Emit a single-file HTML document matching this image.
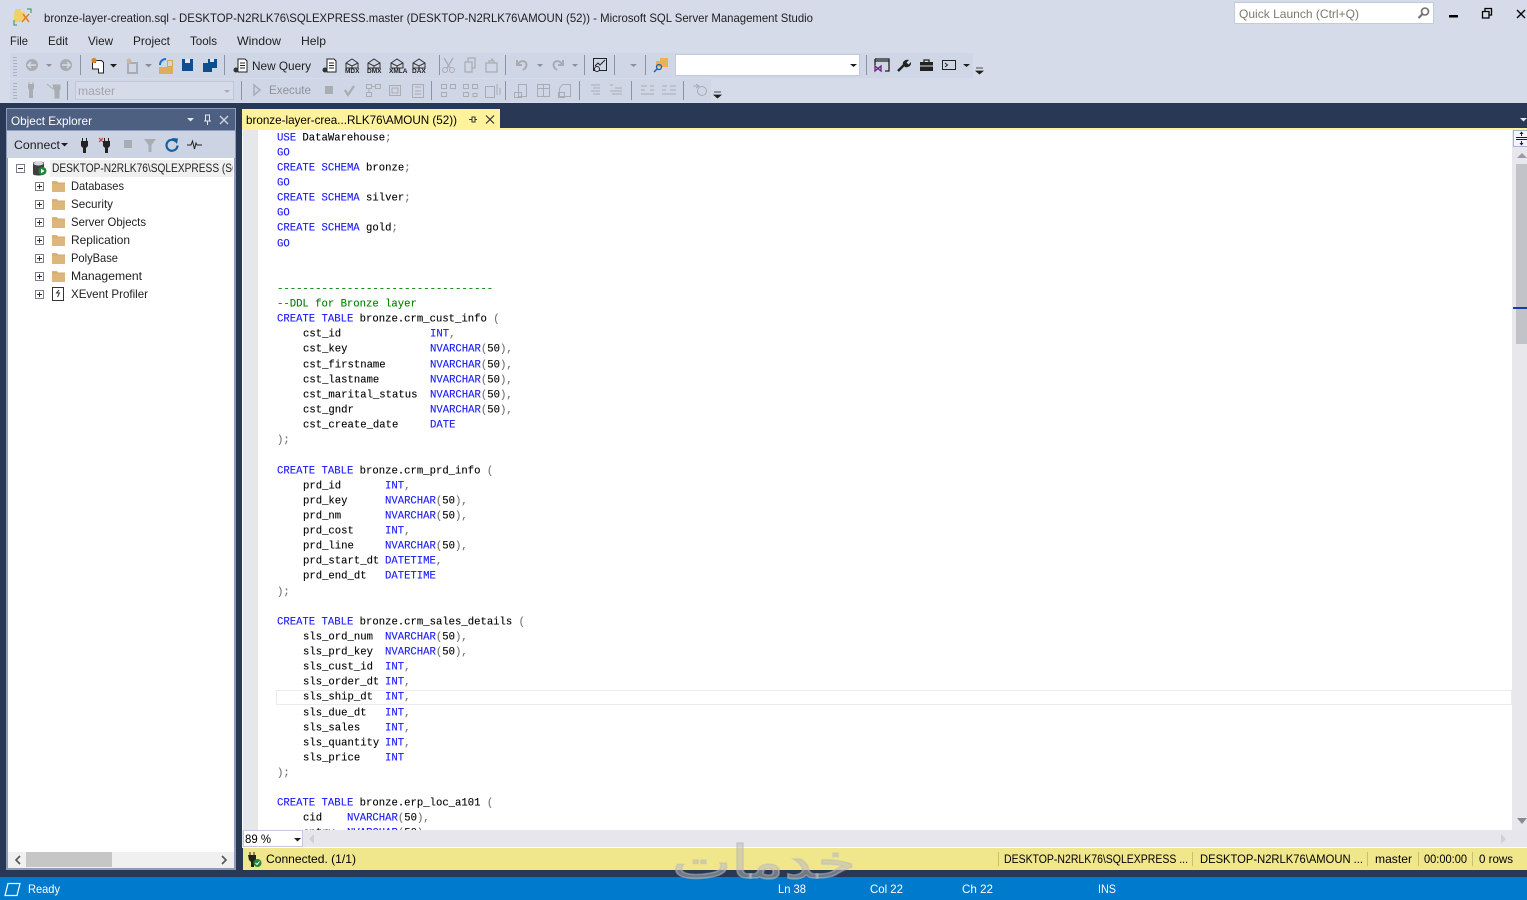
<!DOCTYPE html>
<html><head><meta charset="utf-8"><style>
html,body{margin:0;padding:0;width:1527px;height:900px;overflow:hidden;background:#293955}
svg{display:block}
text{font-family:"Liberation Sans",sans-serif;font-size:12px;fill:#1e1e1e;white-space:pre}
.c text{font-family:"Liberation Mono",monospace;font-size:10.6px;fill:#000;stroke:#000;stroke-width:.12}
.c .k{fill:#1a1aff;stroke:#1a1aff}.c .g{fill:#707070;stroke:#707070}
.c text.kl{fill:#1a1aff;stroke:#1a1aff}.c text.gl{fill:#707070;stroke:#707070}.c text.nl{fill:#008000;stroke:#008000}
</style></head><body>
<svg width="1527" height="900" viewBox="0 0 1527 900" xmlns="http://www.w3.org/2000/svg">
<defs>
<g id="fo"><path d="M0 2h5l1 1.500h7v9.500H0z" fill="#dcb67a"/><path d="M0 4h13" stroke="#c9a264" stroke-width=".6"/></g>
<g id="pl"><rect x=".5" y=".5" width="8" height="8" fill="#fff" stroke="#7a7f8a"/><path d="M2 4.500h5M4.500 2v5" stroke="#333"/></g>
<g id="hex" fill="none" stroke="#333"><path d="M1 5l6-4 6 4v5H1zM1 5l6 3 6-3M7 8v2"/></g>
</defs>
<rect width="1527" height="103" fill="#d6dbe9"/>
<!-- app icon -->
<path d="M15 9h6v3h-6zM14 12h11v6l-4 4h-7z" fill="#f3cf6c"/><path d="M23 14l6 8M29 14l-7 8" stroke="#e0812a" stroke-width="1.600"/><path d="M14 20v5h3M27 9h4v4" stroke="#2f8f6a" fill="none"/>
<text x="44" y="22" textLength="769" lengthAdjust="spacingAndGlyphs">bronze-layer-creation.sql - DESKTOP-N2RLK76\SQLEXPRESS.master (DESKTOP-N2RLK76\AMOUN (52)) - Microsoft SQL Server Management Studio</text>
<!-- quick launch -->
<rect x="1234.500" y="2.500" width="199" height="21" fill="#fff" stroke="#c3c9de"/>
<text x="1239" y="18" textLength="120" lengthAdjust="spacingAndGlyphs" style="fill:#7a7a70">Quick Launch (Ctrl+Q)</text>
<circle cx="1425" cy="11.500" r="3.500" fill="none" stroke="#6f6f6f" stroke-width="1.600"/><path d="M1422.500 14l-4 4" stroke="#6f6f6f" stroke-width="2"/>
<rect x="1449" y="15" width="9" height="2.500" fill="#000"/>
<path d="M1482.500 11.500h6.500v6.500h-6.500zM1485 11v-2.500h6.500v6.500h-2.500" fill="none" stroke="#000" stroke-width="1.300"/>
<path d="M1517 10l8 8M1525 10l-8 8" stroke="#000" stroke-width="1.400"/>
<!-- menu -->
<g>
<text x="10" y="45" textLength="18" lengthAdjust="spacingAndGlyphs">File</text>
<text x="48" y="45" textLength="20" lengthAdjust="spacingAndGlyphs">Edit</text>
<text x="88" y="45" textLength="25" lengthAdjust="spacingAndGlyphs">View</text>
<text x="133" y="45" textLength="37" lengthAdjust="spacingAndGlyphs">Project</text>
<text x="190" y="45" textLength="27" lengthAdjust="spacingAndGlyphs">Tools</text>
<text x="237" y="45" textLength="44" lengthAdjust="spacingAndGlyphs">Window</text>
<text x="301" y="45" textLength="25" lengthAdjust="spacingAndGlyphs">Help</text>
</g>
<!-- toolbars -->
<rect x="10" y="53" width="963" height="25" fill="#cfd6e5"/>
<rect x="10" y="79" width="701" height="23" fill="#cfd6e5"/>
<path d="M14 57v19M16 57v19M14 83v16M16 83v16" stroke="#8a8f9c" stroke-width="1" stroke-dasharray="1 2"/>
<path d="M80.500 55v20M224.500 55v20M439.500 55v20M505.500 55v20M584.500 55v20M614.500 55v20M645.500 55v20M866.500 55v20M67.500 81v19M241.500 81v19M431.500 81v19M505.500 81v19M579.500 81v19M631.500 81v19M683.500 81v19" stroke="#8c93a3"/>
<!-- nav -->
<circle cx="32" cy="65" r="6" fill="#a9acb2"/><path d="M36 65h-7M31 62l-3 3 3 3" stroke="#d6dbe9" fill="none" stroke-width="1.400"/>
<path d="M46 64h6l-3 3z" fill="#8d909a"/>
<circle cx="66" cy="65" r="6" fill="#a9acb2"/><path d="M62 65h7M67 62l3 3-3 3" stroke="#d6dbe9" fill="none" stroke-width="1.400"/>
<!-- new project -->
<path d="M92.500 62.500h3v-2h6l2 2v10.500h-5v-4h-6z" fill="#fff" stroke="#222"/><circle cx="94" cy="60.500" r="2.600" fill="#e0812a"/>
<path d="M110 64h7l-3.500 3.500z" fill="#1e1e1e"/>
<path d="M128 63h9v10h-9z" fill="none" stroke="#a9acb2" stroke-width="2"/><circle cx="129" cy="61" r="2.500" fill="#c9b9a0"/>
<path d="M145 64h7l-3.500 3.500z" fill="#8d909a"/>
<path d="M159 67h14v7h-14z" fill="#e0ad5f"/><path d="M167.500 60.500h5v6h-5z" fill="none" stroke="#d9a550"/><path d="M160 65c0-4 3-6 6-6" stroke="#1a6fc0" stroke-width="2" fill="none"/>
<path d="M182 59h11v12h-11z" fill="#0e4d92"/><rect x="185" y="59" width="5" height="4" fill="#dfe6f2"/>
<path d="M203 63h9v9h-9z" fill="#0e4d92"/><path d="M208 59h9v9h-5v-5h-4z" fill="#0e4d92"/><rect x="210" y="59" width="4" height="3" fill="#dfe6f2"/>
<!-- new query -->
<path d="M238 59h7l2 2v11h-9z" fill="#fff" stroke="#222"/><path d="M240 63h5M240 65.500h5M240 68h5" stroke="#222"/><circle cx="236" cy="70" r="2.500" fill="#333"/>
<text x="252" y="70" textLength="59" lengthAdjust="spacingAndGlyphs">New Query</text>
<path d="M327 59h7l2 2v11h-9z" fill="#fff" stroke="#222"/><path d="M329 63h5M329 65.500h5M329 68h5" stroke="#222"/><circle cx="325" cy="70" r="2.500" fill="#333"/>
<use href="#hex" x="345" y="58"/><use href="#hex" x="367" y="58"/><use href="#hex" x="390" y="58"/><use href="#hex" x="412" y="58"/>
<g><text x="345" y="73" style="font-size:6.500px;font-weight:700">MDX</text><text x="367" y="73" style="font-size:6.500px;font-weight:700">DMX</text><text x="389" y="73" style="font-size:6.500px;font-weight:700">XMLA</text><text x="412" y="73" style="font-size:6.500px;font-weight:700">DAX</text></g>
<!-- cut copy paste -->
<path d="M444 58l6 10M453 58l-6 10" stroke="#a9acb2" stroke-width="1.300"/><circle cx="445" cy="70" r="2.500" fill="none" stroke="#a9acb2"/><circle cx="452" cy="70" r="2.500" fill="none" stroke="#a9acb2"/>
<path d="M465 62h7v10h-7zM468 62v-4h7v10h-3" fill="none" stroke="#a9acb2" stroke-width="1.200"/>
<path d="M486 63h11v9h-11zM489 63v-2h2l1-2 1 2h1v2" fill="none" stroke="#a9acb2" stroke-width="1.200"/>
<!-- undo redo -->
<path d="M517 60v5h5M518 64c2-3 6-4 8-1 1.500 3-1 6-3 7" fill="none" stroke="#a9acb2" stroke-width="2"/>
<path d="M537 64h6l-3 3z" fill="#8d909a"/>
<path d="M563 60v5h-5M562 64c-2-3-6-4-8-1-1.500 3 1 6 3 7" fill="none" stroke="#a9acb2" stroke-width="2"/>
<path d="M572 64h6l-3 3z" fill="#8d909a"/>
<rect x="593.500" y="58.500" width="13" height="12" fill="none" stroke="#222"/><path d="M595 66l3-3 2 2 5-5" stroke="#222" fill="none"/><circle cx="597" cy="69" r="2.500" fill="#d6dbe9" stroke="#222"/>
<path d="M630 64h7l-3.500 3z" fill="#8d909a"/>
<path d="M660 58h8v9h-12v-6h4z" fill="#eeb057"/><circle cx="659" cy="67" r="2.500" fill="none" stroke="#1a5fb4" stroke-width="1.300"/><path d="M657 69l-3 3" stroke="#1a5fb4" stroke-width="1.500"/>
<rect x="675.500" y="54.500" width="184" height="21" fill="#fff" stroke="#c3c9de"/>
<path d="M850 64h7l-3.500 3z" fill="#1e1e1e"/>
<path d="M875 59h14v12h-4M875 59v6M875 61h14" fill="none" stroke="#222" stroke-width="1.300"/><path d="M875 66l6 5M881 66l-6 5v-5l6 5z" stroke="#68217a" stroke-width="1.300" fill="none"/>
<path d="M898 71l6-6" stroke="#222" stroke-width="2.400"/><path d="M903 65c-1-3 2-6 6-5l-2.500 2.500 2 2 2.500-2.500c.5 4-3 6-6 5z" fill="#222"/>
<path d="M920 62h13v9h-13z" fill="#222"/><path d="M924 62v-2h5v2" fill="none" stroke="#222" stroke-width="1.300"/><path d="M920 66h13" stroke="#d6dbe9"/>
<rect x="942.500" y="60.500" width="13" height="9" fill="none" stroke="#222"/><path d="M945 63l2.500 2-2.500 2" stroke="#222" fill="none"/>
<path d="M963 64h7l-3.500 3z" fill="#1e1e1e"/>
<path d="M976 68h7M976 71h7l-3.500 3z" fill="#1e1e1e" stroke="#1e1e1e" stroke-width=".8"/>
<!-- row 2 -->
<path d="M28 84h6v4l-1 2v8h-4v-8l-1-2z" fill="#a9acb2"/><path d="M29 82v2M33 82v2" stroke="#a9acb2"/>
<path d="M53 85h7v4l-1 2v7h-4v-7l-1-2zM47 84l6 5" fill="#a9acb2" stroke="#a9acb2"/>
<rect x="75.500" y="81.500" width="158" height="18" fill="#d6dbe9" stroke="#c1c7d6"/>
<text x="78" y="95" textLength="37" lengthAdjust="spacingAndGlyphs" style="fill:#a2a4a8">master</text>
<path d="M224 90h6l-3 3z" fill="#a9acb2"/>
<path d="M254 85l6 5-6 5z" fill="none" stroke="#a9acb2" stroke-width="1.500"/>
<text x="269" y="94" textLength="42" lengthAdjust="spacingAndGlyphs" style="fill:#8f929a">Execute</text>
<rect x="325" y="86" width="8" height="8" fill="#a9acb2"/>
<path d="M345 90l3 5 6-9" fill="none" stroke="#a9acb2" stroke-width="2.200"/>
<g fill="none" stroke="#a9acb2"><path d="M366.500 84.500h5v4h-5zM375.500 84.500h5v4h-5zM366.500 92.500h5v4h-5zM372 86.500h3M369 89v3"/>
<path d="M389.500 85.500h11v10h-11zM392 88h6v5h-6z"/><path d="M412.500 84.500h11v13h-11zM415 87h6M415 91h6M415 94h6"/>
<path d="M441.500 84.500h5v4h-5zM450.500 84.500h5v4h-5zM441.500 92.500h5v4h-5zM463.500 84.500h5v4h-5zM472.500 84.500h5v4h-5zM463.500 92.500h5v4h-5zM473 93.500h4v3h-4z"/>
<path d="M485.500 86.500h9v11h-9zM497 84v11M500 88v7"/>
<path d="M518.500 84.500h8v12h-8zM514.500 92.500h7v5h-7zM537.500 84.500h12v12h-12zM537.500 88.500h12M543.500 84.500v12M559.500 88.500l3-4h8v12h-11zM558.500 92.500h6v5h-6z"/>
<path d="M591 85h9M593 88h7M591 91h9M593 94h7M610 85h3M615 88h7M610 91h12M612 94h10M641 86h6M650 86h4M641 90h4M650 90h4M641 94h13M662 86h5M670 86h6M662 90h4M670 90h6M662 94h14"/>
<circle cx="702" cy="91" r="4.500"/></g>
<path d="M693 86h6M696 84l3 2-3 2" stroke="#a9acb2" fill="none"/>
<path d="M714 92h7M714 95h7l-3.500 3z" fill="#1e1e1e" stroke="#1e1e1e" stroke-width=".8"/>
<!-- dark -->
<rect y="103" width="1527" height="774" fill="#293955"/>
<!-- object explorer -->
<rect x="6" y="108" width="230" height="762" fill="#8e9bbc"/>
<rect x="7" y="109" width="228" height="21" fill="#4d6082"/>
<text x="11" y="125" textLength="81" lengthAdjust="spacingAndGlyphs" style="fill:#fff">Object Explorer</text>
<path d="M187 118h7l-3.500 3.500z" fill="#e4e8f2"/>
<path d="M205.500 115h4v6h-4zM204 121h7M207.500 121v4" stroke="#e4e8f2" fill="none"/>
<path d="M220 116l8 8M228 116l-8 8" stroke="#cfd6e5" stroke-width="1.300"/>
<rect x="7" y="131" width="228" height="27" fill="#ccd3e3"/>
<text x="14" y="149" textLength="46" lengthAdjust="spacingAndGlyphs">Connect</text>
<path d="M61 143h7l-3.500 3.500z" fill="#1e1e1e"/>
<path d="M81 141h7v5l-2 2v5h-3v-5l-2-2z" fill="#222"/><path d="M82.500 138v3M86.500 138v3" stroke="#222"/>
<path d="M103 141h7v5l-2 2v5h-3v-5l-2-2z" fill="#222"/><path d="M104.500 138v3M108.500 138v3" stroke="#222"/><path d="M99 138l4 4M103 138l-4 4" stroke="#c0392b"/>
<rect x="124" y="140" width="8" height="8" fill="#a9acb2"/>
<path d="M144 139h12l-4.500 6v7h-3v-7z" fill="#a9acb2"/>
<path d="M176 141.500a5.500 5.500 0 1 0 1.500 4" fill="none" stroke="#14609e" stroke-width="2.200"/><path d="M172 138l6 .5-1 5.500z" fill="#14609e"/>
<path d="M187 145h4l1.500-4 2 8 1.500-6 1 2h5" fill="none" stroke="#222"/>
<!-- tree -->
<rect x="8" y="158" width="226" height="710" fill="#fff"/>
<rect x="50" y="160" width="183" height="17" fill="#f0f0f0"/>
<rect x="16.500" y="164.500" width="8" height="8" fill="#fff" stroke="#7a7f8a"/><path d="M18 168.500h5" stroke="#333"/>
<path d="M33 163c0-2 11-2 11 0v11c0 2-11 2-11 0z" fill="#3f3f3f"/><ellipse cx="38.500" cy="163.500" rx="5" ry="2" fill="#d8d8d8"/>
<circle cx="42.500" cy="171" r="4" fill="#1d8a3a"/><path d="M41 168.800l3.500 2.200-3.500 2.200z" fill="#fff"/>
<text x="52" y="172" textLength="188" lengthAdjust="spacingAndGlyphs">DESKTOP-N2RLK76\SQLEXPRESS (SQ</text>
<rect x="233" y="158" width="1" height="22" fill="#fff"/><rect x="234" y="158" width="2" height="22" fill="#8e9bbc"/><rect x="236" y="158" width="6" height="22" fill="#293955"/>
<use href="#pl" x="35" y="182"/><use href="#fo" x="52" y="179"/><text x="71" y="190" textLength="53" lengthAdjust="spacingAndGlyphs">Databases</text>
<use href="#pl" x="35" y="200"/><use href="#fo" x="52" y="197"/><text x="71" y="208" textLength="42" lengthAdjust="spacingAndGlyphs">Security</text>
<use href="#pl" x="35" y="218"/><use href="#fo" x="52" y="215"/><text x="71" y="226" textLength="75" lengthAdjust="spacingAndGlyphs">Server Objects</text>
<use href="#pl" x="35" y="236"/><use href="#fo" x="52" y="233"/><text x="71" y="244" textLength="59" lengthAdjust="spacingAndGlyphs">Replication</text>
<use href="#pl" x="35" y="254"/><use href="#fo" x="52" y="251"/><text x="71" y="262" textLength="47" lengthAdjust="spacingAndGlyphs">PolyBase</text>
<use href="#pl" x="35" y="272"/><use href="#fo" x="52" y="269"/><text x="71" y="280" textLength="71" lengthAdjust="spacingAndGlyphs">Management</text>
<use href="#pl" x="35" y="290"/><rect x="52.500" y="287.500" width="11" height="13" fill="#fff" stroke="#333"/><path d="M59 290l-2.500 3h3l-2 4" stroke="#333" fill="none"/><text x="71" y="298" textLength="77" lengthAdjust="spacingAndGlyphs">XEvent Profiler</text>
<!-- OE scrollbar -->
<rect x="8" y="852" width="226" height="16" fill="#f0f0f0"/>
<rect x="26" y="852" width="86" height="15" fill="#c6c6c6"/>
<path d="M20 856l-4 4 4 4M222 856l4 4-4 4" fill="none" stroke="#555" stroke-width="1.600"/>
<!-- tab -->
<rect x="242" y="109" width="258" height="19" fill="#fff29d"/>
<text x="246" y="124" textLength="211" lengthAdjust="spacingAndGlyphs" style="fill:#000">bronze-layer-crea...RLK76\AMOUN (52))</text>
<path d="M469 119.500h3M472 117h3v5h-3zM475 119.500h2" stroke="#333" fill="none"/>
<path d="M486 115.500l8 8M494 115.500l-8 8" stroke="#333" stroke-width="1.200"/>
<path d="M1520 118h7l-3.500 3.500z" fill="#e4e8f2"/>
<rect x="242" y="128" width="1285" height="2" fill="#fff29d"/>
<!-- editor -->
<rect x="242" y="130" width="1285" height="718" fill="#fff"/>
<rect x="243" y="130" width="15" height="700" fill="#e6e7e8"/>
<rect x="276.500" y="690.500" width="1235" height="14" fill="#fff" stroke="#eaeaf2"/>
<g class="c" transform="translate(0,-.6)">
<text x="277" y="141"><tspan class="k">USE</tspan> DataWarehouse<tspan class="g">;</tspan></text>
<text x="277" y="156" class="kl">GO</text>
<text x="277" y="171"><tspan class="k">CREATE</tspan> <tspan class="k">SCHEMA</tspan> bronze<tspan class="g">;</tspan></text>
<text x="277" y="186" class="kl">GO</text>
<text x="277" y="201"><tspan class="k">CREATE</tspan> <tspan class="k">SCHEMA</tspan> silver<tspan class="g">;</tspan></text>
<text x="277" y="216" class="kl">GO</text>
<text x="277" y="231"><tspan class="k">CREATE</tspan> <tspan class="k">SCHEMA</tspan> gold<tspan class="g">;</tspan></text>
<text x="277" y="247" class="kl">GO</text>
<text x="277" y="292" class="nl">----------------------------------</text>
<text x="277" y="307" class="nl">--DDL for Bronze layer</text>
<text x="277" y="322"><tspan class="k">CREATE</tspan> <tspan class="k">TABLE</tspan> bronze.crm_cust_info <tspan class="g">(</tspan></text>
<text x="303" y="337">cst_id<tspan x="430" class="k">INT</tspan><tspan class="g">,</tspan></text>
<text x="303" y="352">cst_key<tspan x="430" class="k">NVARCHAR</tspan><tspan class="g">(</tspan>50<tspan class="g">),</tspan></text>
<text x="303" y="368">cst_firstname<tspan x="430" class="k">NVARCHAR</tspan><tspan class="g">(</tspan>50<tspan class="g">),</tspan></text>
<text x="303" y="383">cst_lastname<tspan x="430" class="k">NVARCHAR</tspan><tspan class="g">(</tspan>50<tspan class="g">),</tspan></text>
<text x="303" y="398">cst_marital_status<tspan x="430" class="k">NVARCHAR</tspan><tspan class="g">(</tspan>50<tspan class="g">),</tspan></text>
<text x="303" y="413">cst_gndr<tspan x="430" class="k">NVARCHAR</tspan><tspan class="g">(</tspan>50<tspan class="g">),</tspan></text>
<text x="303" y="428">cst_create_date<tspan x="430" class="k">DATE</tspan></text>
<text x="277" y="443" class="gl">);</text>
<text x="277" y="474"><tspan class="k">CREATE</tspan> <tspan class="k">TABLE</tspan> bronze.crm_prd_info <tspan class="g">(</tspan></text>
<text x="303" y="489">prd_id<tspan x="385" class="k">INT</tspan><tspan class="g">,</tspan></text>
<text x="303" y="504">prd_key<tspan x="385" class="k">NVARCHAR</tspan><tspan class="g">(</tspan>50<tspan class="g">),</tspan></text>
<text x="303" y="519">prd_nm<tspan x="385" class="k">NVARCHAR</tspan><tspan class="g">(</tspan>50<tspan class="g">),</tspan></text>
<text x="303" y="534">prd_cost<tspan x="385" class="k">INT</tspan><tspan class="g">,</tspan></text>
<text x="303" y="549">prd_line<tspan x="385" class="k">NVARCHAR</tspan><tspan class="g">(</tspan>50<tspan class="g">),</tspan></text>
<text x="303" y="564">prd_start_dt<tspan x="385" class="k">DATETIME</tspan><tspan class="g">,</tspan></text>
<text x="303" y="579">prd_end_dt<tspan x="385" class="k">DATETIME</tspan></text>
<text x="277" y="595" class="gl">);</text>
<text x="277" y="625"><tspan class="k">CREATE</tspan> <tspan class="k">TABLE</tspan> bronze.crm_sales_details <tspan class="g">(</tspan></text>
<text x="303" y="640">sls_ord_num<tspan x="385" class="k">NVARCHAR</tspan><tspan class="g">(</tspan>50<tspan class="g">),</tspan></text>
<text x="303" y="655">sls_prd_key<tspan x="385" class="k">NVARCHAR</tspan><tspan class="g">(</tspan>50<tspan class="g">),</tspan></text>
<text x="303" y="670">sls_cust_id<tspan x="385" class="k">INT</tspan><tspan class="g">,</tspan></text>
<text x="303" y="685">sls_order_dt<tspan x="385" class="k">INT</tspan><tspan class="g">,</tspan></text>
<text x="303" y="700">sls_ship_dt<tspan x="385" class="k">INT</tspan><tspan class="g">,</tspan></text>
<text x="303" y="716">sls_due_dt<tspan x="385" class="k">INT</tspan><tspan class="g">,</tspan></text>
<text x="303" y="731">sls_sales<tspan x="385" class="k">INT</tspan><tspan class="g">,</tspan></text>
<text x="303" y="746">sls_quantity<tspan x="385" class="k">INT</tspan><tspan class="g">,</tspan></text>
<text x="303" y="761">sls_price<tspan x="385" class="k">INT</tspan></text>
<text x="277" y="776" class="gl">);</text>
<text x="277" y="806"><tspan class="k">CREATE</tspan> <tspan class="k">TABLE</tspan> bronze.erp_loc_a101 <tspan class="g">(</tspan></text>
<text x="303" y="821">cid<tspan x="347" class="k">NVARCHAR</tspan><tspan class="g">(</tspan>50<tspan class="g">),</tspan></text>
<text x="303" y="836">cntry<tspan x="347" class="k">NVARCHAR</tspan><tspan class="g">(</tspan>50<tspan class="g">)</tspan></text>
</g>
<!-- v scrollbar -->
<rect x="1512" y="130" width="15" height="700" fill="#e8e8ec"/>
<rect x="1513.500" y="130.500" width="14" height="16" fill="#f3f5fa" stroke="#a9b4d0"/>
<path d="M1516 139.500h11M1516 137.500h11" stroke="#1a1a40"/><path d="M1521.500 136v-4M1521.500 141v4" stroke="#1a1a40"/><path d="M1519.500 134l2-2.500 2 2.500zM1519.500 143l2 2.500 2-2.500z" fill="#1a1a40"/>
<path d="M1517 158h10l-5-5z" fill="#9a9aa6"/>
<rect x="1516" y="164" width="11" height="180" fill="#c2c3c9"/>
<rect x="1513" y="307" width="14" height="2" fill="#1a3ea8"/>
<path d="M1517 818h10l-5 6z" fill="#8a8a94"/>
<!-- h bar -->
<rect x="242" y="830" width="1285" height="18" fill="#e6e6ec"/>
<rect x="243.500" y="830.500" width="59" height="16" fill="#fff" stroke="#c3c9de"/>
<text x="245" y="843" textLength="26" lengthAdjust="spacingAndGlyphs" style="fill:#000">89 %</text>
<path d="M294 838h7l-3.500 3.500z" fill="#1e1e1e"/>
<path d="M314 834l-5 5 5 5z" fill="#d0d0d6"/><path d="M1501 834l5 5-5 5z" fill="#d0d0d6"/>
<rect x="242" y="847" width="1285" height="1" fill="#fff"/>
<!-- query status -->
<rect x="243" y="848" width="1284" height="22" fill="#f0e68c"/>
<path d="M248 855h8v5l-2 2v5h-3v-5l-2-2z" fill="#222"/><path d="M250 852v3M254 852v3" stroke="#222"/>
<circle cx="257.500" cy="863" r="4" fill="#1d8a3a"/><path d="M255.500 863l1.500 1.500 2.500-3" stroke="#fff" fill="none"/>
<text x="266" y="863" textLength="90" lengthAdjust="spacingAndGlyphs" style="fill:#000">Connected. (1/1)</text>
<path d="M998.500 852v14M1192.500 852v14M1367.500 852v14M1418.500 852v14M1472.500 852v14" stroke="#c9bf6e"/>
<text x="1004" y="863" textLength="184" lengthAdjust="spacingAndGlyphs" style="fill:#000">DESKTOP-N2RLK76\SQLEXPRESS ...</text>
<text x="1200" y="863" textLength="163" lengthAdjust="spacingAndGlyphs" style="fill:#000">DESKTOP-N2RLK76\AMOUN ...</text>
<text x="1375" y="863" textLength="37" lengthAdjust="spacingAndGlyphs" style="fill:#000">master</text>
<text x="1424" y="863" textLength="43" lengthAdjust="spacingAndGlyphs" style="fill:#000">00:00:00</text>
<text x="1479" y="863" textLength="34" lengthAdjust="spacingAndGlyphs" style="fill:#000">0 rows</text>
<!-- status bar -->
<rect y="877" width="1527" height="23" fill="#007acc"/>
<path d="M8 883.500h12l-3 12H5z" fill="none" stroke="#fff" stroke-width="1.200"/>
<text x="28" y="893" textLength="32" lengthAdjust="spacingAndGlyphs" style="fill:#fff">Ready</text>
<text x="778" y="893" textLength="28" lengthAdjust="spacingAndGlyphs" style="fill:#fff">Ln 38</text>
<text x="870" y="893" textLength="33" lengthAdjust="spacingAndGlyphs" style="fill:#fff">Col 22</text>
<text x="962" y="893" textLength="31" lengthAdjust="spacingAndGlyphs" style="fill:#fff">Ch 22</text>
<text x="1098" y="893" textLength="18" lengthAdjust="spacingAndGlyphs" style="fill:#fff">INS</text>
<!-- watermark -->
<text x="672" y="878" textLength="184" lengthAdjust="spacingAndGlyphs" style='font-family:"DejaVu Sans",sans-serif;font-size:46px;fill:#b9b9b9;fill-opacity:.5;stroke:#b9b9b9;stroke-opacity:.5;stroke-width:1.500' direction="rtl" text-anchor="start" dx="184">خدمات</text>
</svg>
</body></html>
